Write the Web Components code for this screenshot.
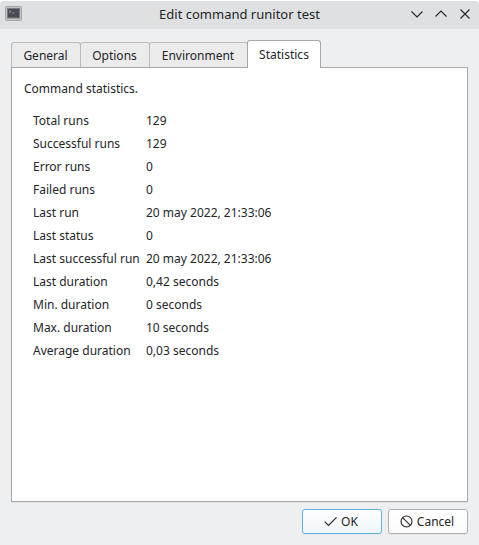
<!DOCTYPE html>
<html lang="en">
<head>
<meta charset="utf-8">
<title>Edit command runitor test</title>
<style>
html,body{margin:0;height:100%;overflow:hidden;background:#fff}
body{font:12px/17px "Noto Sans",sans-serif;color:#232629}
</style>
</head>
<body>
<command-dialog></command-dialog>
<script>
function define(name, html) {
  const t = document.createElement('template');
  t.innerHTML = html;
  customElements.define(name, class extends HTMLElement {
    constructor() {
      super();
      this.attachShadow({mode: 'open'}).append(t.content.cloneNode(true));
    }
  });
}

define('title-bar', `
<style>
:host{display:grid;box-sizing:border-box;grid-template-columns:72px 1fr 72px;align-items:center;height:28px;padding-bottom:2px;margin-top:1px;background:#dee0e2;border-radius:4px 4px 0 0;font-size:13px;line-height:18px}
.app{margin:-1px 0 0 5px;display:block}
.t{text-align:center;white-space:nowrap}
.c{display:flex;gap:8px;padding-left:2px}
.c svg{display:block;fill:none;stroke:#232629;stroke-width:1.1}
</style>
<svg class="app" width="17" height="15" viewBox="0 0 17 15"><rect x=".5" y=".5" width="16" height="14" rx="1" fill="#c3c5c5" stroke="#a4a6a6"/><rect x="2" y="2" width="13" height="10.5" fill="#777b7e"/><rect x="3" y="3" width="11" height="8.5" fill="#484b56"/><path d="M4 4.500l2 1.200-2 1.200M7 7h2.500" stroke="#a0a3a9" stroke-width=".8" fill="none"/></svg>
<span class="t"><slot></slot></span>
<span class="c">
<svg width="16" height="16"><path d="M2.500 5.500L8 11l5.500-5.500"/></svg>
<svg width="16" height="16"><path d="M2.500 10.500L8 5l5.500 5.500"/></svg>
<svg width="16" height="16"><path d="M3.500 3.500l9 9m0-9l-9 9"/></svg>
</span>`);

define('tab-item', `
<style>
:host{display:block;box-sizing:border-box;height:25px;border:1px solid #b9bbbc;border-bottom:0;border-radius:3px 3px 0 0;background:#ebebeb;text-align:center;padding:4px 1px 0 0;margin-right:-1px;white-space:nowrap}
:host([active]){height:28px;padding:5px 0 0;background:#fff;border-color:#a6a8aa;z-index:1;position:relative;margin-bottom:-1px}
</style><slot></slot>`);

define('tab-strip', `
<style>:host{display:flex;align-items:flex-end;height:27px;padding-left:11px}</style><slot></slot>`);

define('tab-pane', `
<style>:host{display:block;box-sizing:border-box;height:435px;margin:0 11px;border:1px solid #a6a8aa;background:#fff;padding:12px;box-shadow:0 1px #e2e3e4}</style><slot></slot>`);

define('stat-table', `
<style>:host{display:grid;grid-template-columns:113px 1fr;grid-auto-rows:23px;padding:12px 0 0 9px;align-items:center;white-space:nowrap}</style><slot></slot>`);

define('stat-row', `
<style>:host{display:contents}</style><span><slot name="label"></slot></span><span><slot></slot></span>`);

define('push-button', `
<style>
:host{display:flex;box-sizing:border-box;width:80px;height:25px;padding-right:2px;align-items:center;justify-content:center;gap:4px;border:1px solid #aeb0b2;border-radius:3px;background:linear-gradient(#fff,#fbfbfb);box-shadow:0 1px #e4e5e6}
:host([primary]){border-color:#5bb4e3;background:linear-gradient(#fdfeff,#eff6fa)}
::slotted(svg){display:block;fill:none;stroke:#232629;stroke-width:1.1;flex:none}
</style><slot></slot>`);

define('command-dialog', `
<style>
:host{display:flex;flex-direction:column;height:545px;box-sizing:border-box;background:linear-gradient(#fff 5px,#eeeff1 5px)}
tab-strip{margin-top:11px}
.foot{display:flex;justify-content:flex-end;gap:6px;padding:7px 11px 0}
</style>
<title-bar>Edit command runitor test</title-bar>
<tab-strip>
<tab-item style="width:70px">General</tab-item><tab-item style="width:70px">Options</tab-item><tab-item style="width:99px">Environment</tab-item><tab-item active style="width:74px">Statistics</tab-item>
</tab-strip>
<tab-pane>
<div>Command statistics.</div>
<stat-table></stat-table>
</tab-pane>
<div class="foot">
<push-button primary><svg width="13" height="13"><path d="M.7 6.700L4.500 10.500L12.500 2.300"/></svg><span>OK</span></push-button>
<push-button><svg width="13" height="13"><circle cx="6.500" cy="6.500" r="5.500"/><path d="M2.600 2.600l7.800 7.800"/></svg><span>Cancel</span></push-button>
</div>`);

const stats = [
  ['Total runs', '129'], ['Successful runs', '129'], ['Error runs', '0'], ['Failed runs', '0'],
  ['Last run', '20 may 2022, 21:33:06'], ['Last status', '0'],
  ['Last successful run', '20 may 2022, 21:33:06'], ['Last duration', '0,42 seconds'],
  ['Min. duration', '0 seconds'], ['Max. duration', '10 seconds'], ['Average duration', '0,03 seconds']
];
const table = document.querySelector('command-dialog').shadowRoot.querySelector('stat-table');
for (const [label, value] of stats) {
  const row = document.createElement('stat-row');
  const l = document.createElement('span');
  l.slot = 'label';
  l.textContent = label;
  row.append(l, value);
  table.append(row);
}
</script>
</body>
</html>
